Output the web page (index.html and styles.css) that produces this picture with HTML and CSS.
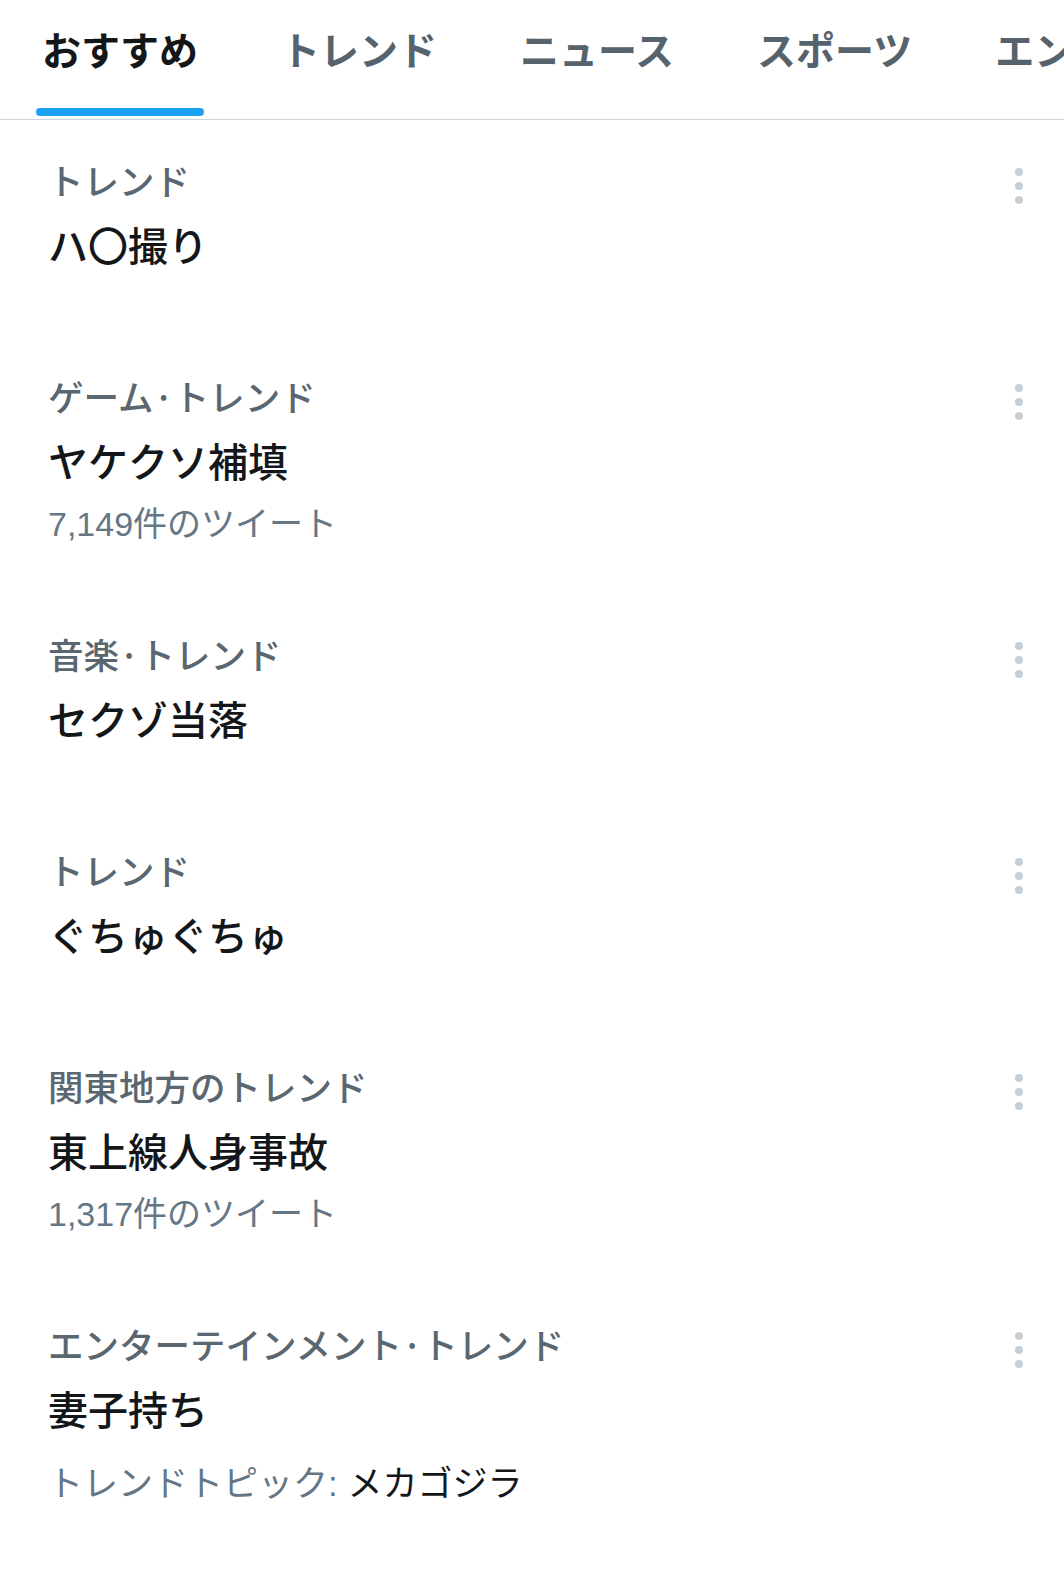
FILE: index.html
```html
<!DOCTYPE html>
<html lang="ja">
<head>
  <meta charset="UTF-8" />
  <meta name="viewport" content="width=device-width, initial-scale=1" />
  <title>話題を検索</title>
  <link rel="stylesheet" href="styles.css">
</head>
<body>

  <nav class="tabs">
    <a href="#" class="tab active">おすすめ</a>
    <a href="#" class="tab">トレンド</a>
    <a href="#" class="tab">ニュース</a>
    <a href="#" class="tab">スポーツ</a>
    <a href="#" class="tab">エンタメ</a>
  </nav>

  <ul class="trends">
    <li class="trend">
      <div class="trend-body">
        <div class="trend-meta">トレンド</div>
        <div class="trend-name">ハ〇撮り</div>
      </div>
      <button class="more" aria-label="その他">
        <svg width="8" height="36" viewBox="0 0 8 36"><circle cx="4" cy="4" r="4"/><circle cx="4" cy="18" r="4"/><circle cx="4" cy="32" r="4"/></svg>
      </button>
    </li>

    <li class="trend">
      <div class="trend-body">
        <div class="trend-meta">ゲーム·トレンド</div>
        <div class="trend-name">ヤケクソ補填</div>
        <div class="trend-count">7,149件のツイート</div>
      </div>
      <button class="more" aria-label="その他">
        <svg width="8" height="36" viewBox="0 0 8 36"><circle cx="4" cy="4" r="4"/><circle cx="4" cy="18" r="4"/><circle cx="4" cy="32" r="4"/></svg>
      </button>
    </li>

    <li class="trend">
      <div class="trend-body">
        <div class="trend-meta">音楽·トレンド</div>
        <div class="trend-name">セクゾ当落</div>
      </div>
      <button class="more" aria-label="その他">
        <svg width="8" height="36" viewBox="0 0 8 36"><circle cx="4" cy="4" r="4"/><circle cx="4" cy="18" r="4"/><circle cx="4" cy="32" r="4"/></svg>
      </button>
    </li>

    <li class="trend">
      <div class="trend-body">
        <div class="trend-meta">トレンド</div>
        <div class="trend-name">ぐちゅぐちゅ</div>
      </div>
      <button class="more" aria-label="その他">
        <svg width="8" height="36" viewBox="0 0 8 36"><circle cx="4" cy="4" r="4"/><circle cx="4" cy="18" r="4"/><circle cx="4" cy="32" r="4"/></svg>
      </button>
    </li>

    <li class="trend">
      <div class="trend-body">
        <div class="trend-meta">関東地方のトレンド</div>
        <div class="trend-name">東上線人身事故</div>
        <div class="trend-count">1,317件のツイート</div>
      </div>
      <button class="more" aria-label="その他">
        <svg width="8" height="36" viewBox="0 0 8 36"><circle cx="4" cy="4" r="4"/><circle cx="4" cy="18" r="4"/><circle cx="4" cy="32" r="4"/></svg>
      </button>
    </li>

    <li class="trend">
      <div class="trend-body">
        <div class="trend-meta">エンターテインメント·トレンド</div>
        <div class="trend-name">妻子持ち</div>
        <div class="trend-topic">トレンドトピック: <span>メカゴジラ</span></div>
      </div>
      <button class="more" aria-label="その他">
        <svg width="8" height="36" viewBox="0 0 8 36"><circle cx="4" cy="4" r="4"/><circle cx="4" cy="18" r="4"/><circle cx="4" cy="32" r="4"/></svg>
      </button>
    </li>
  </ul>

</body>
</html>
```

FILE: styles.css
```css
body {
  font-family: "Noto Sans CJK JP", "Noto Sans", sans-serif;
  background-color: #fff;
  color: #14171a;
  margin: 0;
  padding: 0;
}

.tabs {
  display: flex;
  gap: 71px;
  padding: 0 0 3px 36px;
  border-bottom: 1px solid #ccd6dd;
  overflow: hidden;
  white-space: nowrap;
}

.tab {
  flex-shrink: 0;
  display: flex;
  flex-direction: column;
  padding: 20px 6px 0;
  font-size: 39px;
  line-height: 56px;
  font-weight: bold;
  color: #56636d;
  text-decoration: none;
}

.tab::after {
  content: "";
  display: block;
  height: 8px;
  margin: 32px -6px 0;
  border-radius: 4px;
}

.tab.active {
  color: #14171a;
}

.tab.active::after {
  background-color: #1da1f2;
}

.trends {
  list-style: none;
  margin: 0;
  padding: 0;
}

.trend {
  display: flex;
  justify-content: space-between;
  align-items: flex-start;
  box-sizing: border-box;
  min-height: 216px;
  padding: 36px 41px 48px 48px;
}

.trend-meta {
  font-size: 35.5px;
  line-height: 48px;
  font-weight: 500;
  color: #5b6770;
}

.trend-name {
  margin-top: 12px;
  font-size: 40px;
  line-height: 56px;
  font-weight: 500;
}

.trend-count {
  margin-top: 15px;
  font-family: "Liberation Sans", "Noto Sans CJK JP", sans-serif;
  font-size: 34px;
  line-height: 43px;
  color: #657786;
}

.trend-topic {
  margin-top: 24px;
  font-family: "Liberation Sans", "Noto Sans CJK JP", sans-serif;
  font-size: 35px;
  line-height: 48px;
  color: #657786;
}

.trend-topic span {
  color: #14171a;
}

.more {
  margin-top: 12px;
  padding: 0;
  border: none;
  background: none;
  line-height: 0;
  cursor: pointer;
}

.more svg {
  fill: #c4cfd6;
}
```
